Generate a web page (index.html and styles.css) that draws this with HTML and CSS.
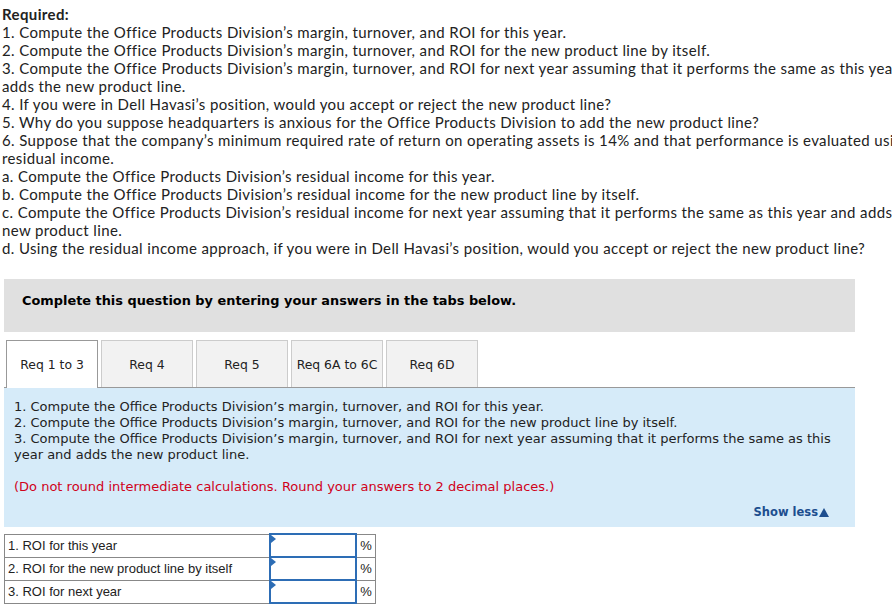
FILE: index.html
```html
<!DOCTYPE html>
<html>
<head>
<meta charset="utf-8">
<link rel="stylesheet" href="styles.css">
</head>
<body>
<div class="page">
  <div class="required">
    <div class="req-title">Required:</div>
    <div>1. Compute the Office Products Division’s margin, turnover, and ROI for this year.</div>
    <div>2. Compute the Office Products Division’s margin, turnover, and ROI for the new product line by itself.</div>
    <div>3. Compute the Office Products Division’s margin, turnover, and ROI for next year assuming that it performs the same as this year and adds the new product line.</div>
    <div>4. If you were in Dell Havasi’s position, would you accept or reject the new product line?</div>
    <div>5. Why do you suppose headquarters is anxious for the Office Products Division to add the new product line?</div>
    <div>6. Suppose that the company’s minimum required rate of return on operating assets is 14% and that performance is evaluated using residual income.</div>
    <div>a. Compute the Office Products Division’s residual income for this year.</div>
    <div>b. Compute the Office Products Division’s residual income for the new product line by itself.</div>
    <div>c. Compute the Office Products Division’s residual income for next year assuming that it performs the same as this year and adds the new product line.</div>
    <div>d. Using the residual income approach, if you were in Dell Havasi’s position, would you accept or reject the new product line?</div>
  </div>

  <div class="question">
    <div class="instructions">Complete this question by entering your answers in the tabs below.</div>

    <div class="tabs">
      <div class="tab active">Req 1 to 3</div>
      <div class="tab">Req 4</div>
      <div class="tab">Req 5</div>
      <div class="tab">Req 6A to 6C</div>
      <div class="tab">Req 6D</div>
    </div>

    <div class="panel">
      <div class="panel-text">
        <div>1. Compute the Office Products Division’s margin, turnover, and ROI for this year.</div>
        <div>2. Compute the Office Products Division’s margin, turnover, and ROI for the new product line by itself.</div>
        <div>3. Compute the Office Products Division’s margin, turnover, and ROI for next year assuming that it performs the same as this year and adds the new product line.</div>
      </div>
      <div class="note">(Do not round intermediate calculations. Round your answers to 2 decimal places.)</div>
      <div class="show-less">Show less<svg class="tri" width="10" height="9" viewBox="0 0 10 9"><polygon points="5,0 10,9 0,9" fill="#1d4e8f"/></svg></div>
    </div>

    <table class="answers">
      <tr>
        <td class="label">1. ROI for this year</td>
        <td class="input"><span class="flag"></span></td>
        <td class="unit">%</td>
      </tr>
      <tr>
        <td class="label">2. ROI for the new product line by itself</td>
        <td class="input"><span class="flag"></span></td>
        <td class="unit">%</td>
      </tr>
      <tr>
        <td class="label">3. ROI for next year</td>
        <td class="input"><span class="flag"></span></td>
        <td class="unit">%</td>
      </tr>
    </table>
  </div>
</div>
</body>
</html>
```

FILE: styles.css
```css
html, body {
  margin: 0;
  padding: 0;
  background: #fff;
  overflow: hidden;
}

.page {
  width: 892px;
  height: 609px;
  overflow: hidden;
  position: relative;
}

.required {
  width: 945px;
  padding: 5px 0 0 2px;
  font-family: Lato, "Open Sans", sans-serif;
  font-size: 15px;
  letter-spacing: 0.38px;
  line-height: 18px;
  color: #222;
}

.req-title {
  font-weight: bold;
}

.question {
  padding: 22px 0 0 4px;
  width: 851px;
}

.instructions {
  background: #e0e0e0;
  height: 53px;
  box-sizing: border-box;
  padding: 14px 0 0 18px;
  font-family: "DejaVu Sans", Verdana, sans-serif;
  font-weight: bold;
  font-size: 12.9px;
  color: #000;
}

.tabs {
  display: flex;
  gap: 3px;
  margin-top: 8px;
  padding-left: 2px;
  border-bottom: 1px solid #999;
  height: 47px;
}

.tab {
  width: 92px;
  height: 47px;
  box-sizing: border-box;
  border: 1px solid #ccc;
  border-bottom: none;
  background: #f2f2f2;
  display: flex;
  align-items: center;
  justify-content: center;
  font-family: "DejaVu Sans", Verdana, sans-serif;
  font-size: 12.4px;
  color: #222;
}

.tab.active {
  background: #fff;
  border-color: #999;
  height: 48px;
  position: relative;
  z-index: 1;
}

.panel {
  background: #d6ebf9;
  padding: 11px 10px 7px 10px;
  font-family: "DejaVu Sans", Verdana, sans-serif;
  font-size: 13px;
  line-height: 16px;
  color: #222;
}

.note {
  margin-top: 16px;
  color: #d0021b;
}

.show-less {
  margin-top: 9px;
  text-align: right;
  padding-right: 16px;
  font-weight: bold;
  font-size: 11.5px;
  color: #1d4e8f;
}

.tri {
  margin-left: 1px;
  vertical-align: -0.5px;
}

.answers {
  margin-top: 6px;
  border-collapse: collapse;
  font-family: "Liberation Sans", Arial, sans-serif;
  font-size: 13px;
  color: #222;
}

.answers td {
  border: 1px solid #888;
  height: 21px;
  padding: 0;
}

.answers .label {
  width: 261px;
  padding-left: 3px;
}

.answers .input {
  width: 84px;
  border: 2px solid #2d6db5;
  position: relative;
  background: #fff;
}

.flag {
  position: absolute;
  left: 0;
  top: 0;
  width: 0;
  height: 0;
  border-top: 4px solid transparent;
  border-bottom: 4px solid transparent;
  border-left: 5px solid #2d6db5;
}

.answers .unit {
  width: 18px;
  text-align: center;
}
```
